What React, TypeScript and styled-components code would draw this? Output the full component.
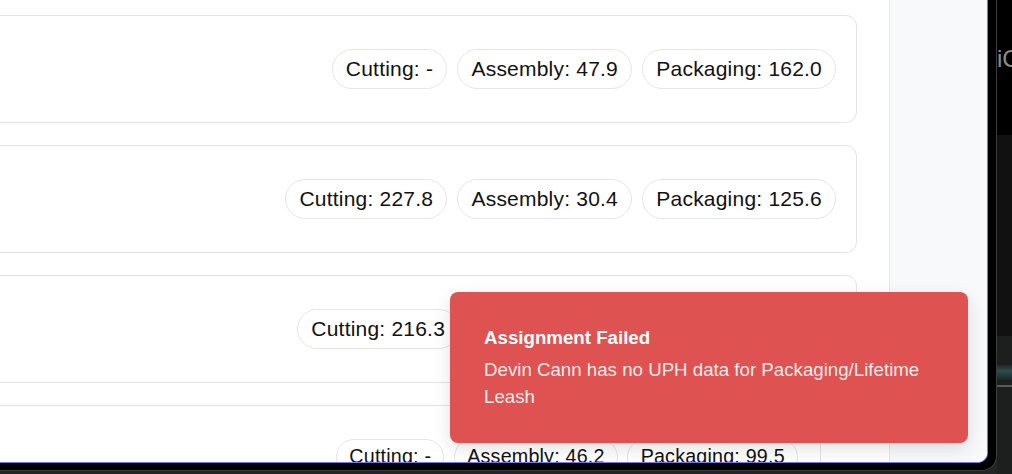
import React from "react";
import styled, { createGlobalStyle } from "styled-components";

const GlobalStyle = createGlobalStyle`
  html, body {
    margin: 0;
    padding: 0;
    background: #232323;
    overflow: hidden;
    font-family: "Liberation Sans", Arial, Helvetica, sans-serif;
  }
  #root {
    width: 1012px;
    height: 474px;
  }
  * { box-sizing: border-box; }
`;

const Desktop = styled.div`
  display: flex;
  width: 1012px;
  height: 474px;
  overflow: hidden;
  background: #242424;
`;

const Frame = styled.div`
  flex: none;
  width: 997px;
  height: 471px;
  padding: 0 8px 7px 0;
  background: #000;
  border-right: 1px solid #3d3d3d;
  border-bottom: 1px solid #3d3d3d;
  border-bottom-right-radius: 15px;
`;

const Window = styled.div`
  position: relative;
  display: flex;
  width: 988px;
  height: 463px;
  background: #fff;
  border-right: 1px solid #8073ee;
  border-bottom: 1px solid #8073ee;
  border-bottom-right-radius: 10px;
  overflow: hidden;
`;

const Main = styled.main`
  flex: none;
  width: 889px;
  padding: 15px 32px 0 0;
  display: flex;
  flex-direction: column;
  gap: 22px;
  overflow: hidden;
`;

const Card = styled.section<{ $compact?: boolean }>`
  flex: none;
  height: ${(p) => (p.$compact ? "104px" : "108px")};
  margin-left: -40px;
  margin-right: ${(p) => (p.$compact ? "36px" : "0")};
  padding-right: ${(p) => (p.$compact ? "22px" : "20px")};
  border: 1px solid #e4e4e7;
  border-radius: 11px;
  background: #fff;
  display: flex;
  align-items: center;
  justify-content: flex-end;
  font-size: ${(p) => (p.$compact ? "19.7px" : "21px")};
`;

const PillRow = styled.div`
  display: flex;
  align-items: center;
  gap: 0.49em;
`;

const Pill = styled.span`
  display: inline-flex;
  align-items: center;
  height: 1.86em;
  padding: 0 0.62em;
  border: 1px solid #e6e6e6;
  border-radius: 999px;
  background: #fff;
  color: #111;
  font-size: inherit;
  white-space: nowrap;
  letter-spacing: 0.01em;
`;

const Sidebar = styled.aside`
  flex: none;
  width: 98px;
  background: #f8f9fb;
  border-left: 1px solid #e7e8ec;
`;

const Toast = styled.div`
  position: absolute;
  right: 19px;
  bottom: 19px;
  width: 518px;
  height: 151px;
  padding: 33px 34px 0 34px;
  border-radius: 8px;
  background: #de5351;
  box-shadow: 0 6px 18px rgba(0, 0, 0, 0.12);
  color: #fff;
`;

const ToastTitle = styled.div`
  font-size: 18.7px;
  font-weight: 700;
  line-height: 26px;
  margin-bottom: 5px;
`;

const ToastBody = styled.div`
  font-size: 18.7px;
  line-height: 27px;
  color: rgba(255, 255, 255, 0.9);
`;

const Backdrop = styled.div`
  flex: 1;
  display: flex;
  flex-direction: column;
  background: #000;
`;

const Segment = styled.div<{ $h: number; $bg: string }>`
  flex: none;
  height: ${(p) => p.$h}px;
  background: ${(p) => p.$bg};
  overflow: hidden;
  position: relative;
`;

const DesktopLabel = styled.span`
  display: block;
  margin: 45px 0 0 0;
  font-family: "Liberation Sans", Arial, sans-serif;
  font-size: 24px;
  line-height: 28px;
  color: #8c8c8c;
  white-space: nowrap;
`;

const Streak = styled.div`
  height: 15px;
  margin-top: 29px;
  background: linear-gradient(180deg, #1e2a2a 0%, #2f4b4c 40%, #22393a 70%, #1c2626 100%);
`;

const Rule = styled.div`
  height: 2px;
  margin-top: 5px;
  background: #5a5a5a;
`;

type Row = { cutting: string; assembly: string; packaging: string; compact?: boolean };

const rows: Row[] = [
  { cutting: "-", assembly: "47.9", packaging: "162.0" },
  { cutting: "227.8", assembly: "30.4", packaging: "125.6" },
  { cutting: "216.3", assembly: "28.7", packaging: "98.4" },
  { cutting: "-", assembly: "46.2", packaging: "99.5", compact: true },
];

export default function App() {
  return (
    <>
      <GlobalStyle />
      <Desktop>
        <Frame>
          <Window>
            <Main>
              {rows.map((r, i) => (
                <Card key={i} $compact={r.compact}>
                  <PillRow>
                    <Pill>Cutting: {r.cutting}</Pill>
                    <Pill>Assembly: {r.assembly}</Pill>
                    <Pill>Packaging: {r.packaging}</Pill>
                  </PillRow>
                </Card>
              ))}
            </Main>
            <Sidebar />
            <Toast role="alert">
              <ToastTitle>Assignment Failed</ToastTitle>
              <ToastBody>Devin Cann has no UPH data for Packaging/Lifetime Leash</ToastBody>
            </Toast>
          </Window>
        </Frame>
        <Backdrop>
          <Segment $h={135} $bg="#000">
            <DesktopLabel>iCloud</DesktopLabel>
          </Segment>
          <Segment $h={201} $bg="#111">
            {null}
          </Segment>
          <Segment $h={138} $bg="#1d1e1e">
            <Streak />
            <Rule />
          </Segment>
        </Backdrop>
      </Desktop>
    </>
  );
}
